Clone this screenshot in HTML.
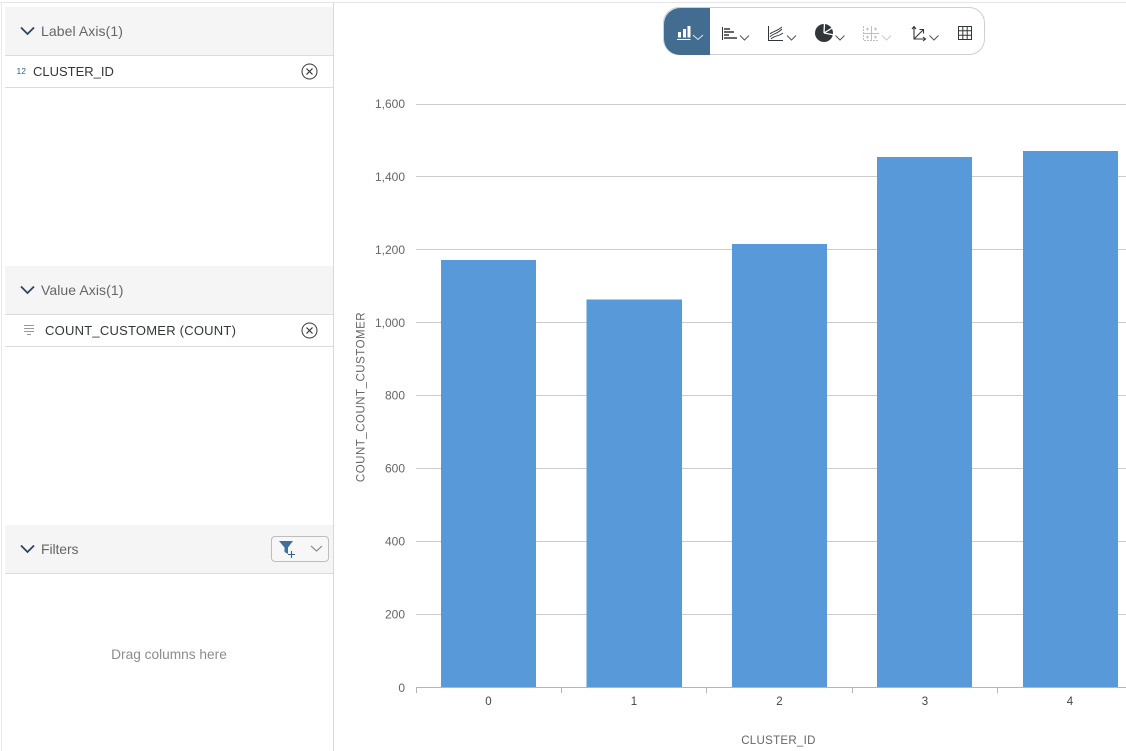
<!DOCTYPE html>
<html><head><meta charset="utf-8"><style>
html,body{margin:0;padding:0;background:#fff}
body{width:1126px;height:751px;position:relative;overflow:hidden;font-family:"Liberation Sans",sans-serif}
.a{position:absolute}
.h{position:absolute;left:5px;width:328px;height:48px;background:#f5f5f5;border-bottom:1px solid #dcdcdc}
.t{position:absolute;left:41px;font-size:14px;color:#666;line-height:16px;white-space:nowrap}
.r{position:absolute;left:5px;width:328px;height:31px;border-bottom:1px solid #dcdcdc}
.n{position:absolute;font-size:13px;color:#32363a;line-height:16px;white-space:nowrap}
svg{position:absolute;overflow:visible}
</style></head><body>
<div class="a" style="left:0;top:2px;width:1126px;height:1px;background:#e4e4ea"></div>
<div class="a" style="left:1px;top:3px;width:1px;height:748px;background:#e8e8e8"></div>
<div class="a" style="left:333px;top:3px;width:1px;height:748px;background:#d9d9d9"></div>

<div class="h" style="top:7px"></div>
<svg style="left:20px;top:26px" width="16" height="10" fill="none" stroke="#2b4560" stroke-width="1.8"><path d="M1 1.5 L7.5 8 L14 1.5"/></svg>
<div class="t" style="top:23px;letter-spacing:.08px">Label Axis(1)</div>
<div class="r" style="top:56px"></div>
<div class="a" style="left:16.500px;top:66px;font-size:8.500px;line-height:10px;color:#346187">12</div>
<div class="n" style="left:33px;top:64px">CLUSTER_ID</div>
<svg style="left:301px;top:63px" width="18" height="18" fill="none" stroke="#32363a" stroke-width="1"><circle cx="8.5" cy="8.5" r="7.5"/><path d="M5.5 5.500 L11.500 11.500 M11.500 5.500 L5.500 11.500" stroke-width="1.2"/></svg>

<div class="h" style="top:266px"></div>
<svg style="left:20px;top:285px" width="16" height="10" fill="none" stroke="#2b4560" stroke-width="1.8"><path d="M1 1.5 L7.5 8 L14 1.5"/></svg>
<div class="t" style="top:282px;letter-spacing:.08px">Value Axis(1)</div>
<div class="r" style="top:315px"></div>
<svg style="left:24px;top:325px" width="11" height="10" fill="none" stroke="#999" stroke-width="1"><path d="M0 .5H10M0 3.5H10M0 6.5H10M3 9.5H7"/></svg>
<div class="n" style="left:45px;top:323px;letter-spacing:.23px">COUNT_CUSTOMER (COUNT)</div>
<svg style="left:301px;top:322px" width="18" height="18" fill="none" stroke="#32363a" stroke-width="1"><circle cx="8.5" cy="8.5" r="7.5"/><path d="M5.5 5.500 L11.500 11.500 M11.500 5.500 L5.500 11.500" stroke-width="1.2"/></svg>

<div class="h" style="top:525px"></div>
<svg style="left:20px;top:544px" width="16" height="10" fill="none" stroke="#2b4560" stroke-width="1.8"><path d="M1 1.5 L7.5 8 L14 1.5"/></svg>
<div class="t" style="top:541px;letter-spacing:-.1px">Filters</div>
<div class="a" style="left:271px;top:536px;width:56px;height:24px;border:1px solid #bdbdbd;border-radius:4px;background:#f7f7f7"></div>
<svg style="left:278px;top:540px" width="22" height="18"><path d="M1 1H15L10 7.500V14L6.500 12V7.500Z" fill="#3f6f9c"/><path d="M13.500 11V18M10 14.500H17" stroke="#346187" stroke-width="1.1" fill="none"/></svg>
<svg style="left:310px;top:545px" width="13" height="8" fill="none" stroke="#808080" stroke-width="1.1"><path d="M1 1 L6.5 6 L12 1"/></svg>
<div class="a" style="left:5px;top:647px;width:328px;text-align:center;font-size:13.7px;line-height:16px;color:#8c8c8c">Drag columns here</div>

<!-- toolbar -->
<div class="a" style="left:663px;top:7px;width:320px;height:46px;border:1px solid #cfcfcf;border-radius:16px;background:#fff"></div>
<div class="a" style="left:664px;top:8px;width:46px;height:47px;background:#426d91;border-radius:16px 0 0 16px"></div>
<svg style="left:676px;top:25px" width="30" height="16" fill="none"><path d="M2 7H5V12.500H2ZM7 4H10V12.500H7ZM11.500 1H14.500V12.500H11.500Z" fill="#fff"/><path d="M1 14.500H14.500" stroke="#fff"/><path d="M17 10 L22 14.500 L27 10" stroke="#dfe7ee"/></svg>
<svg style="left:722px;top:26px" width="30" height="16" fill="none"><path d="M.5 1V14" stroke="#32363a"/><path d="M2 3H8M2 6H12M2 9H7" stroke="#32363a" stroke-width="1.5"/><path d="M2 12H15" stroke="#32363a" stroke-width="1.5"/><path d="M18 9.500 L22.500 14 L27 9.500" stroke="#555"/></svg>
<svg style="left:768px;top:25px" width="30" height="17" fill="none" stroke="#32363a"><path d="M.5 1V15.500H15" /><path d="M2 12C5 8 8 10 14 4M2 9C5 6 8 7 14 2M3 14C7 10 10 12 15 8" stroke-width=".9"/><path d="M19 10.500 L23.500 15 L28 10.500" stroke="#555"/></svg>
<svg style="left:815px;top:24px" width="32" height="18" fill="none"><circle cx="9" cy="9" r="9" fill="#32363a"/><path d="M9 9L9.500 -1M9 9L18 3.500M9 9L19.500 11" stroke="#fff" stroke-width="1.3"/><path d="M20.500 11.500 L25 16 L29.500 11.500" stroke="#555"/></svg>
<svg style="left:863px;top:26px" width="30" height="17" fill="none" stroke="#bfbfbf"><path d="M.5 0V14.500H16" stroke-dasharray="2 1"/><path d="M8.500 0V14M1 7.500H16" /><path d="M3 3H6M11 3H14M3 11H6M11 11H14M4.500 1.500V4.500M12.500 1.500V4.500M4.500 9.500V12.500M12.500 9.500V12.500" stroke-width=".9"/><path d="M19 9.500 L23.500 14 L28 9.500" stroke="#ccc"/></svg>
<svg style="left:910px;top:25px" width="32" height="18" fill="none" stroke="#32363a" stroke-width="1.1"><path d="M4 2V14H15"/><path d="M2 4L4 1.500L6 4M13 12L15.500 14L13 16"/><path d="M4 14L13 5M9.500 4.500H13.500V8.500"/><path d="M19.500 10.500 L24 15 L28.500 10.500" stroke="#555" stroke-width="1"/></svg>
<svg style="left:958px;top:26px" width="14" height="14" fill="none" stroke="#32363a"><path d="M.5.5H13.500V13.500H.5ZM.5 4.800H13.500M.5 9.200H13.500M4.800.5V13.500M9.200.5V13.500"/></svg>

<!-- chart -->
<svg style="left:0;top:0" width="1126" height="751" font-family="'Liberation Sans',sans-serif">
<g stroke="#cccccc" stroke-width="1">
<path d="M416 104.500H1126M416 176.500H1126M416 249.500H1126M416 322.500H1126M416 395.500H1126M416 468.500H1126M416 541.500H1126M416 614.500H1126"/>
</g>
<g fill="#5899da">
<rect x="441" y="260" width="95" height="427"/>
<rect x="586.500" y="299.500" width="95.500" height="387.500"/>
<rect x="732" y="244" width="95" height="443"/>
<rect x="877" y="157" width="95" height="530"/>
<rect x="1023" y="151" width="95" height="536"/>
</g>
<path d="M416 687.500H1126M416.500 687V693M561.500 687V693M706.500 687V693M852.500 687V693M997.500 687V693" stroke="#b5b5b5" fill="none"/>
<g font-size="12" fill="#666" text-anchor="end">
<text x="405" y="108">1,600</text>
<text x="405" y="181">1,400</text>
<text x="405" y="254">1,200</text>
<text x="405" y="327">1,000</text>
<text x="405" y="399.500">800</text>
<text x="405" y="472.500">600</text>
<text x="405" y="545.500">400</text>
<text x="405" y="618.500">200</text>
<text x="405" y="692">0</text>
</g>
<g font-size="11.500" fill="#444" text-anchor="middle">
<text x="488.500" y="705">0</text>
<text x="634" y="705">1</text>
<text x="779.500" y="705">2</text>
<text x="925" y="705">3</text>
<text x="1070" y="705">4</text>
</g>
<text x="778.500" y="744" font-size="11.500" fill="#666" text-anchor="middle" letter-spacing=".3">CLUSTER_ID</text>
<text transform="translate(364.500 397) rotate(-90)" font-size="11.500" fill="#666" text-anchor="middle" letter-spacing=".5">COUNT_COUNT_CUSTOMER</text>
</svg>
</body></html>
